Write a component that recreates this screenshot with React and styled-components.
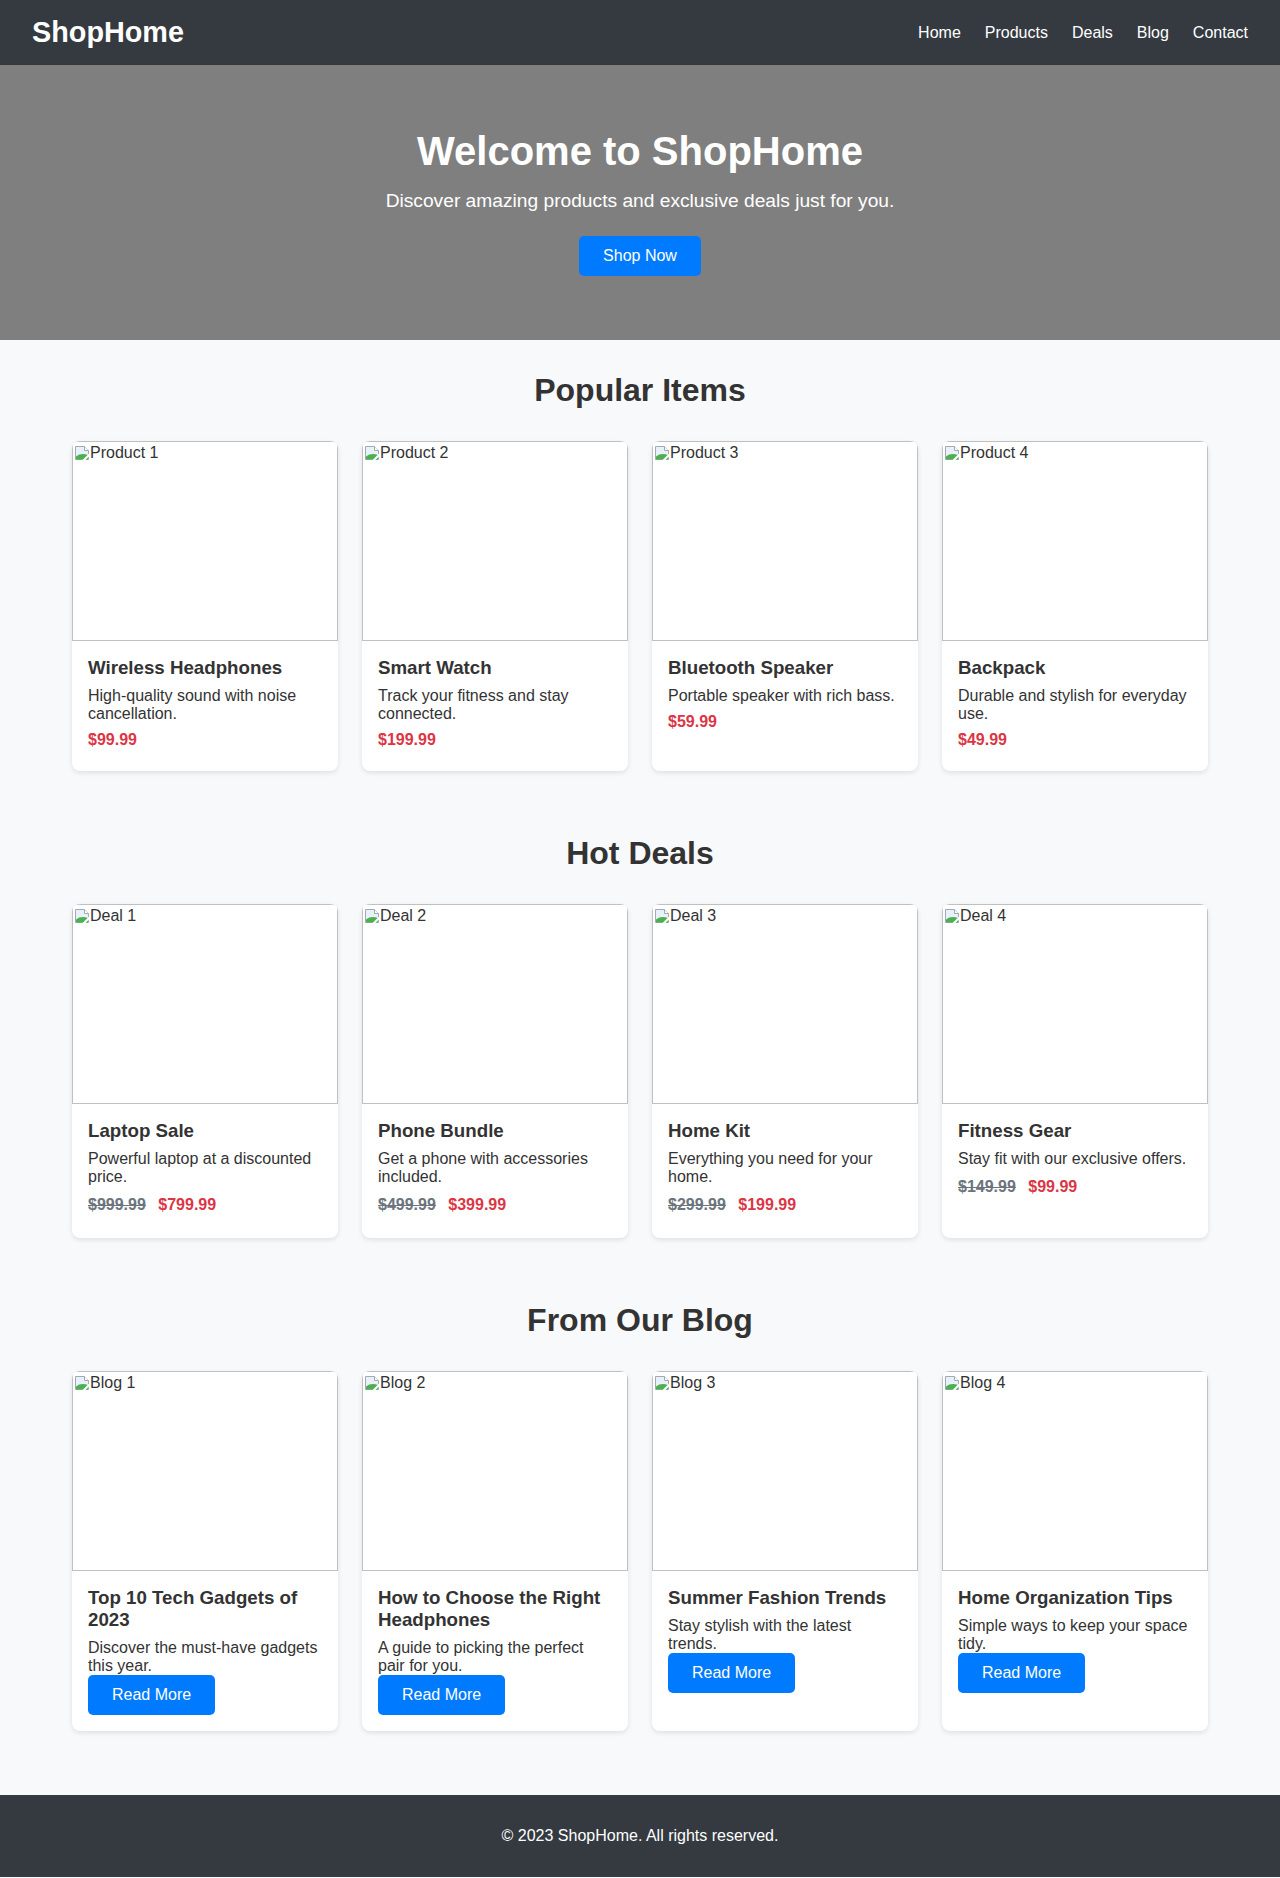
import React from 'react';
import styled, { createGlobalStyle } from 'styled-components';

const GlobalStyle = createGlobalStyle`
  body {
    margin: 0;
    font-family: "Liberation Sans", Arial, Helvetica, sans-serif;
    background: #f8f9fa;
    color: #333;
  }
`;

const Header = styled.header`
  display: flex;
  justify-content: space-between;
  align-items: center;
  height: 65px;
  padding: 0 32px;
  background: #343a40;
  color: #fff;
`;

const Logo = styled.div`
  font-size: 28.8px;
  font-weight: bold;
`;

const Nav = styled.nav`
  display: flex;
  gap: 24px;
`;

const NavLink = styled.a`
  color: #fff;
  text-decoration: none;
  font-size: 16px;
`;

const Hero = styled.section`
  background: #7f7f7f;
  color: #fff;
  text-align: center;
  padding: 64px 20px;
`;

const HeroTitle = styled.h1`
  font-size: 40px;
  margin: 0 0 16px;
`;

const HeroText = styled.p`
  font-size: 19.2px;
  margin: 0 0 24px;
`;

const Button = styled.a`
  display: inline-flex;
  align-items: center;
  height: 40px;
  padding: 0 24px;
  background: #007bff;
  color: #fff;
  border-radius: 5px;
  font-size: 16px;
  text-decoration: none;
  box-sizing: border-box;
`;

const Section = styled.section`
  max-width: 1200px;
  margin: 0 auto;
  padding: 32px;
  box-sizing: border-box;
`;

const SectionTitle = styled.h2`
  font-size: 32px;
  text-align: center;
  margin: 0 0 32px;
  color: #333;
`;

const Grid = styled.div`
  display: grid;
  grid-template-columns: repeat(4, 1fr);
  gap: 24px;
`;

const Card = styled.div`
  background: #fff;
  border-radius: 8px;
  box-shadow: 0 2px 5px rgba(0, 0, 0, 0.1);
  overflow: hidden;
`;

const ImageBox = styled.div`
  height: 200px;
  border: 1px solid #c0c0c0;
  box-sizing: border-box;
  padding-top: 2px;
  font-size: 16px;
`;

const AltRow = styled.span`
  display: flex;
  align-items: center;
  padding-left: 1px;
`;

const CardBody = styled.div`
  padding: 16px;
`;

const CardTitle = styled.h3`
  font-size: 18.72px;
  margin: 0 0 8px;
  color: #333;
`;

const CardText = styled.p`
  margin: 0;
  font-size: 16px;
`;

const Price = styled.p`
  margin: ${(p) => (p.$deal ? '10px 0 8px' : '8px 0 6px')};
  font-weight: bold;
  color: #dc3545;
`;

const OldPrice = styled.span`
  color: #6c757d;
  text-decoration: line-through;
  margin-right: 8px;
`;

const Footer = styled.footer`
  margin-top: 32px;
  padding: 32px;
  background: #343a40;
  color: #fff;
  text-align: center;
  font-size: 16px;
`;

const BrokenIcon = () => (
  <svg width="16" height="16" viewBox="0 0 16 16">
    <path d="M1.5 1.5h9l4 4v9h-13z" fill="#e8f0fa" stroke="#a0aab5" />
    <path d="M10.5 1.5v4h4" fill="#fff" stroke="#a0aab5" />
    <path d="M2 14.5V11.5Q7 7.5 14 10v4.5z" fill="#4caf50" />
    <path d="M9 16L16 9" stroke="#fff" strokeWidth="2" />
  </svg>
);

const Placeholder = ({ alt }) => (
  <ImageBox>
    <AltRow>
      <BrokenIcon />
      {alt}
    </AltRow>
  </ImageBox>
);

const products = [
  { alt: 'Product 1', title: 'Wireless Headphones', text: 'High-quality sound with noise cancellation.', price: '$99.99' },
  { alt: 'Product 2', title: 'Smart Watch', text: 'Track your fitness and stay connected.', price: '$199.99' },
  { alt: 'Product 3', title: 'Bluetooth Speaker', text: 'Portable speaker with rich bass.', price: '$59.99' },
  { alt: 'Product 4', title: 'Backpack', text: 'Durable and stylish for everyday use.', price: '$49.99' },
];

const deals = [
  { alt: 'Deal 1', title: 'Laptop Sale', text: 'Powerful laptop at a discounted price.', old: '$999.99', price: '$799.99' },
  { alt: 'Deal 2', title: 'Phone Bundle', text: 'Get a phone with accessories included.', old: '$499.99', price: '$399.99' },
  { alt: 'Deal 3', title: 'Home Kit', text: 'Everything you need for your home.', old: '$299.99', price: '$199.99' },
  { alt: 'Deal 4', title: 'Fitness Gear', text: 'Stay fit with our exclusive offers.', old: '$149.99', price: '$99.99' },
];

const posts = [
  { alt: 'Blog 1', title: 'Top 10 Tech Gadgets of 2023', text: 'Discover the must-have gadgets this year.' },
  { alt: 'Blog 2', title: 'How to Choose the Right Headphones', text: 'A guide to picking the perfect pair for you.' },
  { alt: 'Blog 3', title: 'Summer Fashion Trends', text: 'Stay stylish with the latest trends.' },
  { alt: 'Blog 4', title: 'Home Organization Tips', text: 'Simple ways to keep your space tidy.' },
];

export default function App() {
  return (
    <>
      <GlobalStyle />
      <Header>
        <Logo>ShopHome</Logo>
        <Nav>
          <NavLink href="#">Home</NavLink>
          <NavLink href="#">Products</NavLink>
          <NavLink href="#">Deals</NavLink>
          <NavLink href="#">Blog</NavLink>
          <NavLink href="#">Contact</NavLink>
        </Nav>
      </Header>

      <Hero>
        <HeroTitle>Welcome to ShopHome</HeroTitle>
        <HeroText>Discover amazing products and exclusive deals just for you.</HeroText>
        <Button href="#">Shop Now</Button>
      </Hero>

      <Section>
        <SectionTitle>Popular Items</SectionTitle>
        <Grid>
          {products.map((p) => (
            <Card key={p.alt}>
              <Placeholder alt={p.alt} />
              <CardBody>
                <CardTitle>{p.title}</CardTitle>
                <CardText>{p.text}</CardText>
                <Price>{p.price}</Price>
              </CardBody>
            </Card>
          ))}
        </Grid>
      </Section>

      <Section>
        <SectionTitle>Hot Deals</SectionTitle>
        <Grid>
          {deals.map((d) => (
            <Card key={d.alt}>
              <Placeholder alt={d.alt} />
              <CardBody>
                <CardTitle>{d.title}</CardTitle>
                <CardText>{d.text}</CardText>
                <Price $deal>
                  <OldPrice>{d.old}</OldPrice> {d.price}
                </Price>
              </CardBody>
            </Card>
          ))}
        </Grid>
      </Section>

      <Section>
        <SectionTitle>From Our Blog</SectionTitle>
        <Grid>
          {posts.map((b) => (
            <Card key={b.alt}>
              <Placeholder alt={b.alt} />
              <CardBody>
                <CardTitle>{b.title}</CardTitle>
                <CardText>{b.text}</CardText>
                <Button href="#">Read More</Button>
              </CardBody>
            </Card>
          ))}
        </Grid>
      </Section>

      <Footer>© 2023 ShopHome. All rights reserved.</Footer>
    </>
  );
}
